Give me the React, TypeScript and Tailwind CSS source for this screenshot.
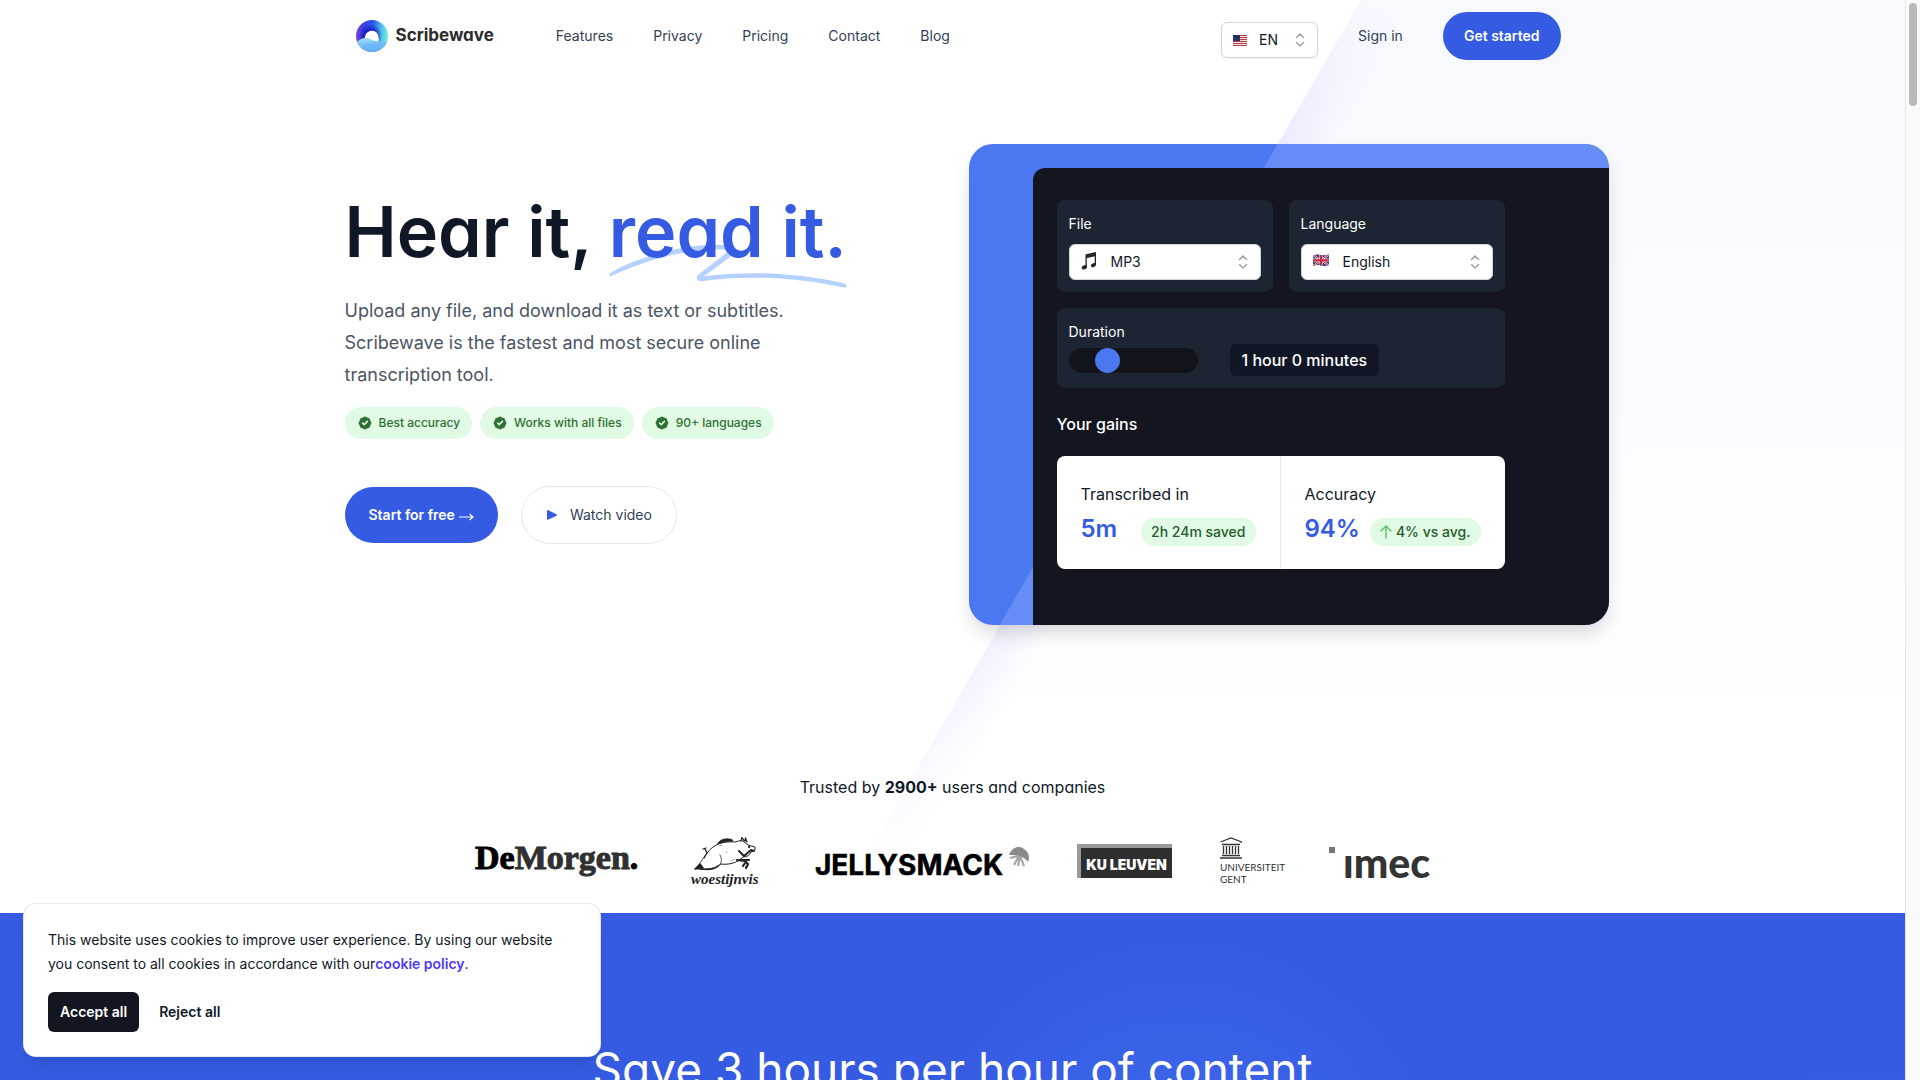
import type { ReactNode } from 'react';
import { HiBadgeCheck } from 'react-icons/hi';

function LogoMark() {
  return (
    <svg viewBox="0 0 31 31" className="size-8" aria-hidden="true">
      <defs>
        <linearGradient id="ring" x1="0" y1="0.4" x2="1" y2="0.45">
          <stop offset="0" stopColor="#8a3fd6" />
          <stop offset="0.18" stopColor="#3b3fe0" />
          <stop offset="0.5" stopColor="#2a50ea" />
          <stop offset="0.8" stopColor="#4fc3ea" />
          <stop offset="1" stopColor="#7af0d8" />
        </linearGradient>
        <radialGradient id="core" cx="0.45" cy="0.5" r="0.36">
          <stop offset="0.4" stopColor="#1414b8" stopOpacity="0.95" />
          <stop offset="1" stopColor="#1414b8" stopOpacity="0" />
        </radialGradient>
        <linearGradient id="wave" x1="0" y1="0" x2="0.3" y2="1">
          <stop offset="0" stopColor="#a5e6f7" />
          <stop offset="1" stopColor="#4f9df2" />
        </linearGradient>
        <clipPath id="disc">
          <circle cx="15.5" cy="15.5" r="15.5" />
        </clipPath>
      </defs>
      <g clipPath="url(#disc)">
        <rect width="31" height="31" fill="url(#ring)" />
        <rect width="31" height="31" fill="url(#core)" />
        <path d="M8.500 20 C8 14 11 10.500 15.500 10.500 C20 10.500 22.500 14 22 21 Z" fill="#fff" />
        <path d="M0 22 C4 17.500 10 16 15 19 C20 22 25 21.500 31 20.500 V31 H0 Z" fill="url(#wave)" />
        <path d="M4 31 C8 24 18 21 31 22 V31 Z" fill="#6fb9f7" opacity="0.7" />
      </g>
    </svg>
  );
}

function FlagUS() {
  return (
    <svg viewBox="0 0 14 11" className="h-[11px] w-[14px]" aria-hidden="true">
      <rect width="14" height="11" fill="#f3dcdc" />
      {[0, 2, 4, 6, 8, 10].map((y) => (
        <rect key={y} y={y} width="14" height="1" fill="#b9414d" />
      ))}
      <rect width="7" height="6" fill="#26315f" />
    </svg>
  );
}

function FlagUK() {
  return (
    <svg viewBox="0 0 16 12" className="mb-1 h-3 w-4" aria-hidden="true">
      <clipPath id="cloth">
        <path d="M0 1.500 Q4 0 8 1 T16 0 V11 Q12 12.500 8 11.500 T0 12 Z" />
      </clipPath>
      <g clipPath="url(#cloth)">
        <rect width="16" height="12" fill="#26377d" />
        <path d="M0 1 L16 11.500 M16 0.500 L0 12" stroke="#e6dfe8" strokeWidth="2" />
        <path d="M0 1 L16 11.500 M16 0.500 L0 12" stroke="#c92a3c" strokeWidth="1" />
        <path d="M8 0 V12 M0 6.300 H16" stroke="#e6dfe8" strokeWidth="3.400" />
        <path d="M8 0 V12 M0 6.300 H16" stroke="#c92a3c" strokeWidth="2.200" />
      </g>
    </svg>
  );
}

function Notes() {
  return (
    <svg viewBox="0 0 16 18" className="mb-0.5 h-[18px] w-4" aria-hidden="true" fill="#22262e">
      <path d="M5 2.200 L15 0 V4 L5 6.200 Z" />
      <rect x="4.500" y="2.500" width="1.300" height="12.500" />
      <rect x="13.700" y="1" width="1.300" height="12" />
      <ellipse cx="3.300" cy="15.300" rx="2.700" ry="2" transform="rotate(-20 3.300 15.300)" />
      <ellipse cx="12.400" cy="13.200" rx="2.600" ry="1.900" transform="rotate(-20 12.400 13.200)" />
    </svg>
  );
}

function Picker({ id, label, icon, value, className }: { id: string; label: string; icon: ReactNode; value: string; className: string }) {
  return (
    <div className="relative">
      <span className="pointer-events-none absolute inset-y-0 left-3 flex items-center">{icon}</span>
      <select
        id={id}
        aria-label={label}
        defaultValue={value}
        className={`h-9 appearance-none rounded-md border border-gray-300 bg-white pr-8 text-sm text-gray-900 shadow-xs ${className}`}
      >
        <option>{value}</option>
      </select>
      <svg viewBox="0 0 10 14" className="pointer-events-none absolute top-[11px] right-[13px] h-3.5 w-2.5" fill="none" stroke="#9ca3af" strokeWidth="1.500" strokeLinecap="round" strokeLinejoin="round" aria-hidden="true">
        <path d="M1.500 4.500 L5 1 L8.500 4.500 M1.500 9.500 L5 13 L8.500 9.500" />
      </svg>
    </div>
  );
}

function Header() {
  return (
    <header className="mx-auto flex h-[72px] w-full max-w-7xl items-center px-8">
      <a href="#home" className="flex items-center gap-2 pl-[11px] text-[17px] font-bold text-[#2b2b2b] [font-feature-settings:'cv11']">
        <LogoMark />
        Scribewave
      </a>
      <nav className="ml-[62px] flex gap-10 text-sm text-slate-700">
        {['Features', 'Privacy', 'Pricing', 'Contact', 'Blog'].map((item) => (
          <a key={item} href={`#${item.toLowerCase()}`}>
            {item}
          </a>
        ))}
      </nav>
      <div className="ml-auto flex items-center gap-10 text-sm">
        <div className="pt-2">
          <Picker id="locale" label="Site language" icon={<FlagUS />} value="EN" className="w-[97px] pl-[37px]" />
        </div>
        <a href="#signin" className="text-slate-700">
          Sign in
        </a>
        <a href="#start" className="flex h-12 items-center rounded-full bg-[#355be3] px-[21px] font-semibold text-white">
          Get started
        </a>
      </div>
    </header>
  );
}

function HeroText() {
  return (
    <div className="pt-[53px]">
      <h1 className="text-[70px] leading-none font-semibold text-gray-900 [font-feature-settings:'cv11']">
        Hear it,{' '}
        <span className="relative text-[#355be3]">
          <svg viewBox="0 0 236 44" className="absolute top-14 left-0 w-full" fill="#b5d1ff" aria-hidden="true">
            <path d="M1 28 C24 14 62 2 98 0 C112 -1 124 1 125 4 C126 8 120 12 112 18 L94 31 C140 25 190 28 233 38 C237 39 236 43 232 42 C190 33 140 29 91 36 C86 36 86 31 89 29 L110 13 C115 9 118 6 118 5 C90 1 40 13 4 30 C1 32 -1 30 1 28 Z" />
          </svg>
          <span className="relative">read it.</span>
        </span>
      </h1>
      <p className="mt-7 max-w-[480px] text-lg leading-8 text-gray-600">
        Upload any file, and download it as text or subtitles. Scribewave is the fastest and most secure online transcription tool.
      </p>
      <ul className="mt-4 flex gap-2">
        {['Best accuracy', 'Works with all files', '90+ languages'].map((item) => (
          <li key={item} className="flex h-8 items-center gap-1.5 rounded-full bg-[#e0fae4] px-3 text-xs font-medium text-[#2f7034]">
            <HiBadgeCheck className="size-4" />
            {item}
          </li>
        ))}
      </ul>
      <div className="mt-[47px] flex items-center gap-[23px]">
        <a href="#start" className="flex h-14 items-center gap-1 rounded-full bg-[#355be3] px-6 text-sm font-semibold text-white">
          Start for free
          <svg viewBox="0 0 15 8" className="mt-1 h-2 w-[15px]" fill="none" stroke="currentColor" strokeWidth="1.200" aria-hidden="true">
            <path d="M0 4 H14 M10.500 1 L14 4 L10.500 7" />
          </svg>
        </a>
        <button type="button" className="flex h-[58px] items-center gap-3 rounded-full border border-slate-200 bg-white px-6 text-sm text-slate-700">
          <svg viewBox="0 0 12 12" className="size-3" fill="#355be3" aria-hidden="true">
            <path d="M1 1.500 Q1 0.800 1.800 1.100 L10.500 5.200 Q11.500 6 10.500 6.700 L1.800 10.800 Q1 11 1 10.400 Z" />
          </svg>
          Watch video
        </button>
      </div>
    </div>
  );
}

function Calculator() {
  return (
    <div className="relative -mr-12 h-[481px] w-[640px] shrink-0 overflow-hidden rounded-3xl bg-[#4b77f0] pt-6 pl-16 shadow-[0_10px_20px_-3px_rgba(0,0,0,0.16)]">
      <div className="absolute inset-0 bg-[#668df5] [clip-path:polygon(309px_0,100%_0,100%_100%,31px_100%)]" />
      <div className="relative flex h-full flex-col rounded-tl-xl bg-[#131621] px-6 pt-8 text-sm text-white">
        <div className="w-[448px]">
          <div className="grid grid-cols-2 gap-4">
            <div className="flex h-[92px] flex-col gap-2.5 rounded-lg bg-[#1e2532] px-3 pt-3.5">
              <label htmlFor="file">File</label>
              <Picker id="file" label="File" icon={<Notes />} value="MP3" className="w-full pl-[41px]" />
            </div>
            <div className="flex h-[92px] flex-col gap-2.5 rounded-lg bg-[#1e2532] px-3 pt-3.5">
              <label htmlFor="language">Language</label>
              <Picker id="language" label="Language" icon={<FlagUK />} value="English" className="w-full pl-[41px]" />
            </div>
          </div>
          <div className="mt-4 h-20 rounded-lg bg-[#1e2532] px-3 pt-3.5">
            <label htmlFor="duration" className="mb-0.5 block">
              Duration
            </label>
            <div className="flex items-center gap-8">
              <input
                id="duration"
                type="range"
                defaultValue="25"
                className="h-[25px] w-[129px] appearance-none rounded-full bg-[#11151b] [&::-webkit-slider-thumb]:size-[25px] [&::-webkit-slider-thumb]:appearance-none [&::-webkit-slider-thumb]:rounded-full [&::-webkit-slider-thumb]:bg-[#4b77f0]"
              />
              <output className="rounded-md bg-[#111725] px-3 py-1 text-base font-medium">1 hour 0 minutes</output>
            </div>
          </div>
          <h2 className="mt-6 text-base font-medium">Your gains</h2>
          <dl className="mt-5 grid h-[113px] grid-cols-2 divide-x divide-gray-200 rounded-lg bg-white text-gray-900">
            <div className="px-6 pt-[26px]">
              <dt className="text-base">Transcribed in</dt>
              <dd className="mt-1.5 flex items-center justify-between">
                <span className="text-2xl font-semibold text-[#355be3]">5m</span>
                <span className="mt-1.5 rounded-full bg-[#e0fae4] px-2.5 py-1 font-medium text-[#275a2c]">2h 24m saved</span>
              </dd>
            </div>
            <div className="px-6 pt-[26px]">
              <dt className="text-base">Accuracy</dt>
              <dd className="mt-1.5 flex items-center justify-between">
                <span className="text-2xl font-semibold text-[#355be3]">94%</span>
                <span className="mt-1.5 flex items-center gap-1 rounded-full bg-[#e0fae4] px-2.5 py-1 font-medium text-[#275a2c]">
                  <svg viewBox="0 0 12 14" className="h-3.5 w-3" fill="none" stroke="#62c46a" strokeWidth="1.500" strokeLinecap="round" strokeLinejoin="round" aria-hidden="true">
                    <path d="M6 13 V1 M1 6 L6 1 L11 6" />
                  </svg>
                  4% vs avg.
                </span>
              </dd>
            </div>
          </dl>
        </div>
      </div>
    </div>
  );
}

function Boar() {
  return (
    <svg viewBox="0 0 70 36" className="h-9 w-[70px]" fill="none" stroke="#222" strokeLinecap="round" strokeLinejoin="round" aria-hidden="true">
      <path d="M17 15 C23 7 32 4 44 5 C48 4 50 3 52 4 L57 8 L64 10 L64 13 L60 15 C59 18 56 20 52 20 C46 26 38 28 30 27 C26 31 16 33 8 32" strokeWidth="1" />
      <path d="M17 15 C13 20 10 24 8 28 M29 18 C32 23 30 28 26 30" strokeWidth="0.800" />
      <path d="M27 6 C30 2 35 1 41 2.500 L42 4 C36 4 32 5 27 7 Z" fill="#222" strokeWidth="0.800" />
      <path d="M50 4 L51 0.500 L53 3.500 M54 4 L54.500 1 L56 5" strokeWidth="1.300" />
      <path d="M14 12 L16 16 L13 21 M12 12 L15 11" strokeWidth="1.300" />
      <path d="M48 14 L53 19 L60 13 L63 14" strokeWidth="2" />
      <path d="M46 23 L54 24 L57 27 L55 31 M50 23 L58 23 M54 26 L52 29" strokeWidth="2.200" />
      <path d="M4 32 L9 27 L12 31 Z" fill="#222" strokeWidth="1.500" />
      <path d="M10 32 C18 33 24 32 27 29" strokeWidth="1.600" />
      <path d="M35 15 h1 M28 9 l3 -1 M40 24 l4 -2" strokeWidth="0.800" stroke="#888" />
      <circle cx="58" cy="10" r="0.700" fill="#222" />
    </svg>
  );
}

function Partners() {
  return (
    <ul className="mx-auto mt-[38px] flex h-12 w-full max-w-[955px] items-center justify-between">
      <li className="w-[168px] pb-1.5 font-['Liberation_Serif',serif] text-[34px] leading-10 font-bold text-black [-webkit-text-stroke:1px]">
        De<span className="text-[#303030]">Morgen</span>.
      </li>
      <li className="flex w-[76px] flex-col items-start font-['Liberation_Serif',serif] text-[15px] leading-3 font-bold text-[#222] italic">
        <Boar />
        woestijnvis
      </li>
      <li className="flex h-8 w-[214px] justify-between text-[28px] font-bold text-black [-webkit-text-stroke:0.5px]">
        <span className="pt-1 leading-8">JELLYSMACK</span>
        <svg viewBox="0 0 20 20" className="mt-0.5 size-5" aria-hidden="true">
          <path d="M0 8 C3 0 10 -2 15 2 C20 5 21 10 19 15 C17 12 14 10 11 10 C8 8 4 8 0 8 Z" fill="#8a8a8a" />
          <path d="M10 9 L1 11 M10 9 L5 18 M11 9 L9 19 M11 9 L15 19" stroke="#a5a5a5" strokeWidth="2.200" fill="none" />
        </svg>
      </li>
      <li className="flex h-[34px] w-[95px] items-center justify-center border-t-4 border-l-4 border-[#9a9a9a] bg-[#2e2e2e] pt-1 text-sm font-black text-white">KU LEUVEN</li>
      <li className="w-[61px] font-[Lato,sans-serif] text-[10px] leading-3 text-[#333]">
        <svg viewBox="0 0 22 22" className="mb-0.5 size-[22px]" fill="none" stroke="#333" aria-hidden="true">
          <path d="M0.500 5 L11 1 L21.500 5 V6" strokeWidth="1.200" />
          <path d="M2 7.500 H20 M3.500 9 V17 M6.500 9 V17 M9.500 9 V17 M12.500 9 V17 M15.500 9 V17 M18.500 9 V17 M2 18.500 H20 M0 21 H22" strokeWidth="1.300" />
        </svg>
        UNIVERSITEIT
        <br />
        GENT
      </li>
      <li className="flex w-[101px] gap-2 pt-1 font-[Lato,sans-serif] text-[41px] leading-9 font-black text-[#333]">
        <svg viewBox="0 0 6 6" className="mt-0.5 size-1.5 shrink-0" aria-hidden="true">
          <rect width="6" height="6" fill="#777" />
        </svg>
        ımec
      </li>
    </ul>
  );
}

function CookieBanner() {
  return (
    <section aria-label="Cookies" className="absolute bottom-6 left-6 w-full max-w-xl rounded-xl bg-white p-6 text-sm text-gray-900 shadow-lg ring-1 ring-gray-200">
      <p className="leading-6">
        This website uses cookies to improve user experience. By using our website you consent to all cookies in accordance with our
        <a href="#cookies" className="font-semibold text-indigo-600">
          cookie policy
        </a>
        .
      </p>
      <div className="mt-4 flex gap-2 font-semibold">
        <button type="button" className="h-10 rounded-md bg-[#131621] px-3 text-white">
          Accept all
        </button>
        <button type="button" className="h-10 px-3">
          Reject all
        </button>
      </div>
    </section>
  );
}

export default function App() {
  return (
    <div className="flex h-screen overflow-hidden bg-white font-[Inter,sans-serif]">
      <div className="relative flex min-w-0 flex-1 flex-col">
        <div className="absolute inset-x-0 top-0 h-[913px] bg-linear-to-b from-[#f8f9ff] from-10% to-white to-85% [clip-path:polygon(1361px_0,100%_0,100%_100%,834px_100%)]">
          <div className="h-full w-full bg-[linear-gradient(120deg,transparent_1177px,#ebebff_1178px,transparent_1225px)] [mask-image:linear-gradient(transparent,black_15%,black_60%,transparent_97%)]" />
        </div>
        <div className="relative flex flex-1 flex-col">
          <Header />
          <main>
            <section className="mx-auto mt-[72px] flex w-full max-w-7xl items-start justify-between px-8">
              <HeroText />
              <Calculator />
            </section>
            <section className="pt-[150px] pb-7">
              <p className="text-center text-base text-gray-900 [font-feature-settings:'cv11']">
                Trusted by <strong>2900+</strong> users and companies
              </p>
              <Partners />
            </section>
            <section className="bg-[#355be3] bg-[radial-gradient(circle_at_62%_110%,#3f6aea,transparent_22%),radial-gradient(ellipse_at_105%_80%,#4068e8,transparent_18%)] pt-32 pb-20">
              <h2 className="text-center text-[46px] leading-14 text-white [font-feature-settings:'cv11']">Save 3 hours per hour of content</h2>
            </section>
          </main>
        </div>
        <CookieBanner />
      </div>
      <div className="w-[15px] border-l border-gray-200 bg-[#fafafa] px-[3px] pt-[3px]" aria-hidden="true">
        <div className="h-[103px] rounded-full bg-[#b9b9b9]" />
      </div>
    </div>
  );
}
